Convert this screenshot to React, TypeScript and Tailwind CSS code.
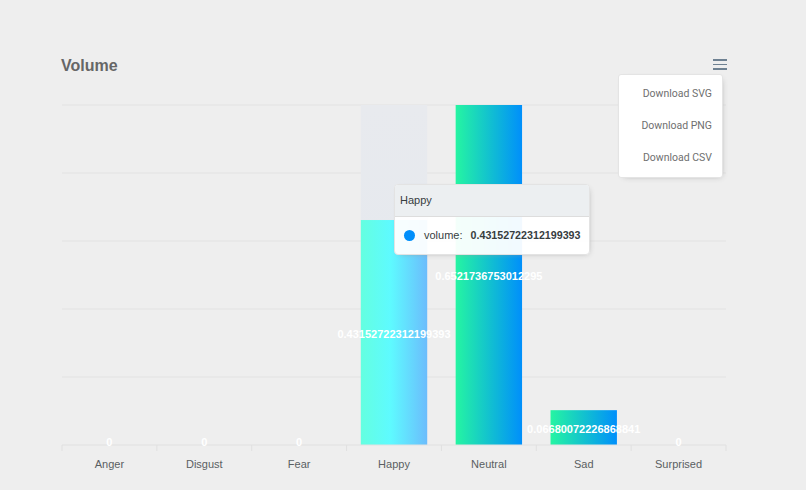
import React from "react";

const CATEGORIES = ["Anger", "Disgust", "Fear", "Happy", "Neutral", "Sad", "Surprised"];
const VALUES = [0, 0, 0, 0.43152722312199393, 0.6521736753012295, 0.06680072226868841, 0];
const LABELS = ["0", "0", "0", "0.43152722312199393", "0.6521736753012295", "0.06680072226868841", "0"];

const LEFT = 62;
const RIGHT = 726;
const TOP = 105;
const BOTTOM = 445;
const COL = (RIGHT - LEFT) / CATEGORIES.length;
const BAR = COL * 0.7;
const MAX = 0.6521736753012295;
const HOVER = 3;

function Chart() {
  const grid = [105, 173, 241, 309, 377];
  return (
    <svg width={806} height={410} viewBox="0 80 806 410" className="block">
      <defs>
        <linearGradient id="barFill" x1="0" x2="1" y1="0" y2="0">
          <stop offset="0%" stopColor="#25f5a2" />
          <stop offset="100%" stopColor="#008ffb" />
        </linearGradient>
        <linearGradient id="barHover" x1="0" x2="1" y1="0" y2="0">
          <stop offset="0%" stopColor="#64ffe0" />
          <stop offset="45%" stopColor="#5efaff" />
          <stop offset="100%" stopColor="#6bbcfc" />
        </linearGradient>
        <linearGradient id="cross" x1="0" x2="0" y1="0" y2="1">
          <stop offset="0%" stopColor="#e8eaee" />
          <stop offset="100%" stopColor="#e3e8ee" />
        </linearGradient>
      </defs>

      {grid.map((y) => (
        <line key={y} x1={LEFT} x2={RIGHT} y1={y} y2={y} stroke="#e2e2e2" strokeWidth={1} />
      ))}

      {/* hover column */}
      <rect x={LEFT + HOVER * COL + COL * 0.15} y={TOP} width={BAR} height={BOTTOM - TOP} fill="url(#cross)" />

      {VALUES.map((v, i) => {
        const h = (v / MAX) * (BOTTOM - TOP);
        const x = LEFT + i * COL + COL * 0.15;
        return v > 0 ? (
          <rect
            key={i}
            x={x}
            y={BOTTOM - h}
            width={BAR}
            height={h}
            fill={i === HOVER ? "url(#barHover)" : "url(#barFill)"}
          />
        ) : null;
      })}

      {/* x axis */}
      <line x1={LEFT} x2={RIGHT} y1={BOTTOM} y2={BOTTOM} stroke="#e0e0e0" strokeWidth={1} />
      {Array.from({ length: CATEGORIES.length + 1 }).map((_, i) => (
        <line
          key={i}
          x1={LEFT + i * COL}
          x2={LEFT + i * COL}
          y1={BOTTOM}
          y2={BOTTOM + 6}
          stroke="#e0e0e0"
          strokeWidth={1}
        />
      ))}

      {/* data labels */}
      {VALUES.map((v, i) => {
        const h = (v / MAX) * (BOTTOM - TOP);
        const cx = LEFT + i * COL + COL / 2;
        const y = v > 0 ? BOTTOM - h / 2 + 5 : BOTTOM + 1;
        return (
          <text
            key={i}
            x={cx}
            y={y}
            textAnchor="middle"
            fill="#ffffff"
            fontSize={11}
            fontWeight={700}
            fontFamily="'Liberation Sans', Arial, sans-serif"
          >
            {LABELS[i]}
          </text>
        );
      })}

      {CATEGORIES.map((c, i) => (
        <text
          key={c}
          x={LEFT + i * COL + COL / 2}
          y={468}
          textAnchor="middle"
          fill="#5a5f62"
          fontSize={11}
          fontFamily="'Liberation Sans', Arial, sans-serif"
        >
          {c}
        </text>
      ))}
    </svg>
  );
}

export default function App() {
  return (
    <div className="relative w-[806px] h-[490px] overflow-hidden bg-[#eeeeee] font-['Liberation_Sans',Arial,sans-serif]">
      {/* Header */}
      <div className="flex items-start justify-between pl-[61px] pr-[79px] pt-[57px] h-[80px]">
        <h2 className="text-[16px] leading-[18px] font-bold text-[#666666]">Volume</h2>
        <button className="mt-[2px] flex flex-col gap-[3px] w-[14px]">
          <span className="block h-[1.6px] w-[14px] bg-[#6e8192]" />
          <span className="block h-[1.6px] w-[14px] bg-[#6e8192]" />
          <span className="block h-[1.6px] w-[14px] bg-[#6e8192]" />
        </button>
      </div>

      <Chart />

      {/* Export menu */}
      <div className="absolute left-[618px] top-[74px] w-[105px] rounded-[3px] border border-[#e4e4e4] bg-white py-[3px] shadow-[2px_2px_6px_-4px_#999] font-['Roboto',sans-serif] text-[10.5px] text-[#6f6f6f]">
        {["Download SVG", "Download PNG", "Download CSV"].map((t) => (
          <div key={t} className="h-[32px] flex items-center justify-end pr-[10px]">
            {t}
          </div>
        ))}
      </div>

      {/* Tooltip */}
      <div className="absolute left-[394px] top-[184px] w-[196px] h-[71px] rounded-[4px] border border-[#e3e3e3] bg-white/95 shadow-[2px_2px_6px_-4px_#999] overflow-hidden text-[11px] text-[#373d3f]">
        <div className="h-[32px] flex items-center px-[5px] bg-[#eceff1] border-b border-[#dddddd]">Happy</div>
        <div className="h-[37px] flex items-center pl-[9px]">
          <span className="w-[11px] h-[11px] rounded-full bg-[#008ffb]" />
          <span className="ml-[9px]">volume:</span>
          <span className="ml-[8px] text-[10.7px] font-bold">0.43152722312199393</span>
        </div>
      </div>
    </div>
  );
}
